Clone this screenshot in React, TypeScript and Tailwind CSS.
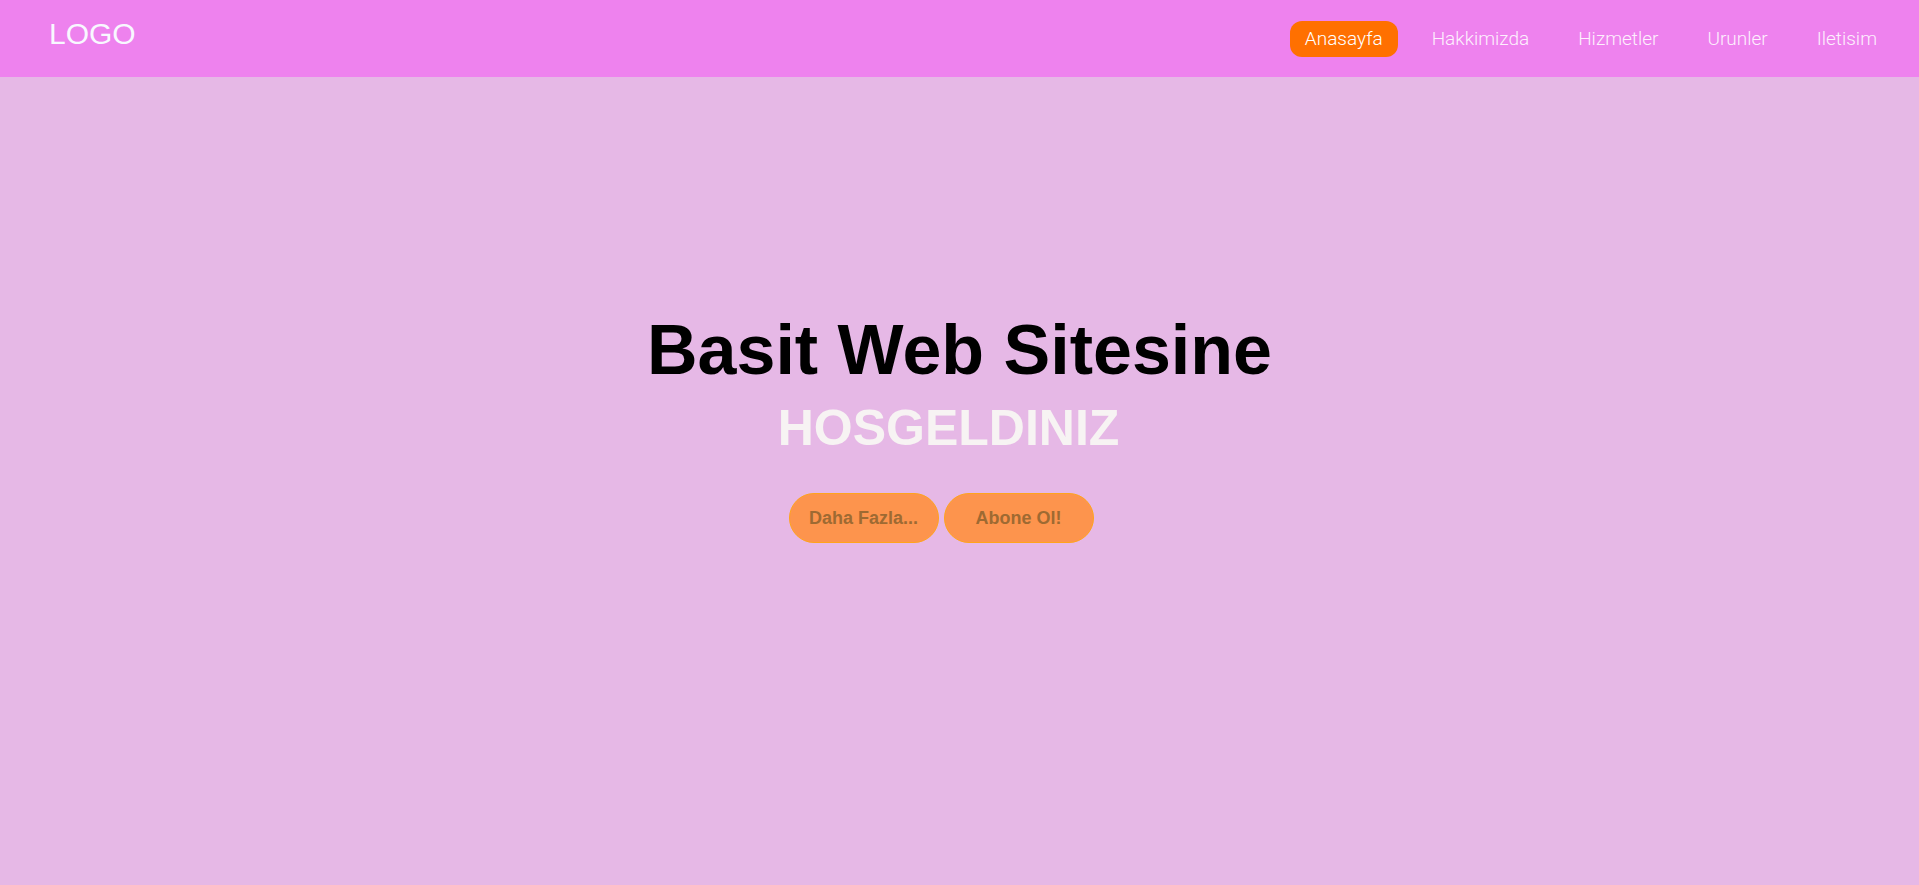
import React from 'react'

const navItems = ["Anasayfa", "Hakkimizda", "Hizmetler", "Urunler", "Iletisim"];

const App = () => {
  const active = "Anasayfa";

  return (
    <div className="min-h-screen bg-[#e6b8e6] font-['Liberation_Sans',Arial,sans-serif]">
      <header className="flex h-[77px] justify-between bg-[#ee82ee]">
        <div className="pl-[49px] pt-[17px] text-[30px] leading-[34px] text-[#f8f8ff]">LOGO</div>
        <nav className="flex items-center gap-[19px] pr-[27px] font-['Roboto',sans-serif]">
          {navItems.map((item) => (
            <a
              key={item}
              href="#"
              className={
                item === active
                  ? "rounded-[12px] bg-[#ff7000] px-[15px] py-[6px] text-[19px] leading-[24px] font-light text-white"
                  : "rounded-[12px] px-[15px] py-[6px] text-[19px] leading-[24px] font-light text-[#fdf0fd]"
              }
            >
              {item}
            </a>
          ))}
        </nav>
      </header>

      <section className="flex flex-col items-center pt-[233px] text-center">
        <h1 className="text-[70px] leading-[80px] font-bold text-black">Basit Web Sitesine</h1>
        <h2 className="mt-[10px] pr-[22px] text-[50px] leading-[57px] font-bold text-[#f7f3f3]">HOSGELDINIZ</h2>
        <div className="mt-[36px] flex gap-[5px] pr-[37px]">
          <button className="h-[50px] w-[150px] rounded-full border border-[#ffa41c] bg-[#fd944d] text-[18px] font-bold text-[#9e6a32]">
            Daha Fazla...
          </button>
          <button className="h-[50px] w-[150px] rounded-full border border-[#ffa41c] bg-[#fd944d] text-[18px] font-bold text-[#9e6a32]">
            Abone Ol!
          </button>
        </div>
      </section>
    </div>
  )
}

export default App;
